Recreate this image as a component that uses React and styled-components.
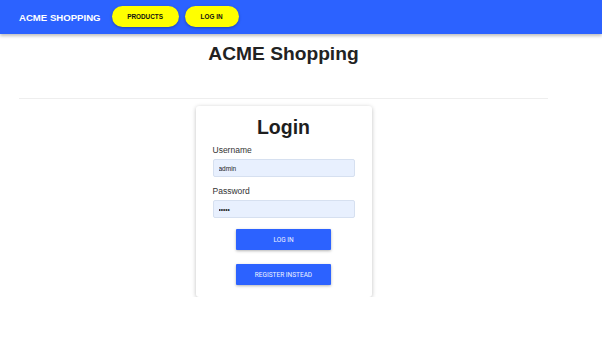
import React from "react";
import styled, { createGlobalStyle } from "styled-components";

const Global = createGlobalStyle`
  * { box-sizing: border-box; }
  body { margin: 0; background: #fff; font-family: "Liberation Sans", Arial, sans-serif; color: #222; }
`;

const NavBar = styled.header`
  height: 34px;
  background: #2c62ff;
  display: flex;
  align-items: center;
  padding-left: 19px;
  gap: 6px;
  box-shadow: 0 2px 3px rgba(0,0,0,0.25);
`;

const Brand = styled.div`
  color: #fff;
  font-weight: bold;
  font-size: 9.6px;
  margin-right: 5px;
`;

const NavButton = styled.button`
  height: 21px;
  width: ${(p) => p.$w}px;
  margin-top: -1px;
  border: none;
  border-radius: 11px;
  background: #ffff00;
  color: #111;
  font-family: "Liberation Sans", Arial, sans-serif;
  font-weight: bold;
  font-size: 6.4px;
  box-shadow: 0 1px 3px rgba(0,0,0,0.3);
  padding: 0;
`;

const Container = styled.main`
  width: 529px;
  margin-left: 19px;
`;

const PageTitle = styled.h1`
  margin: 0;
  padding-top: 9px;
  height: 64px;
  text-align: center;
  font-size: 19.2px;
  font-weight: bold;
  color: #222;
`;

const Rule = styled.hr`
  margin: 0;
  border: none;
  border-top: 1px solid #eee;
`;

const CardWrap = styled.div`
  display: flex;
  justify-content: center;
  padding-top: 7px;
`;

const Card = styled.form`
  width: 176px;
  height: 191px;
  background: #fff;
  border-radius: 3px;
  box-shadow: 0 1px 4px rgba(0,0,0,0.25);
  padding: 9px 17px 0;
  display: flex;
  flex-direction: column;
`;

const CardTitle = styled.h2`
  margin: 0 0 5px;
  text-align: center;
  font-size: 19.5px;
  line-height: 25px;
  font-weight: bold;
  color: #1e1e1e;
`;

const Label = styled.label`
  font-size: 8.5px;
  color: #333;
  line-height: 10px;
  margin-bottom: 4px;
`;

const Input = styled.input`
  height: 18px;
  width: 142px;
  background: #e8f0fe;
  border: 1px solid #d6e0f0;
  border-radius: 2px;
  font-size: 6.5px;
  padding: 0 5px;
  color: #222;
  margin-bottom: 9px;
  font-family: "Liberation Sans", Arial, sans-serif;
`;

const ActionButton = styled.button`
  align-self: center;
  width: 95px;
  height: 21px;
  background: #2c62ff;
  color: #eef2ff;
  border: none;
  border-radius: 1px;
  font-family: Roboto, "Liberation Sans", sans-serif;
  font-size: 6.5px;
  box-shadow: 0 1px 3px rgba(0,0,0,0.3);
  margin-top: ${(p) => p.$mt}px;
  padding: 0;
`;

export default function App() {
  return (
    <>
      <Global />
      <NavBar>
        <Brand>ACME SHOPPING</Brand>
        <NavButton $w={67}>PRODUCTS</NavButton>
        <NavButton $w={54}>LOG IN</NavButton>
      </NavBar>
      <Container>
        <PageTitle>ACME Shopping</PageTitle>
        <Rule />
        <CardWrap>
          <Card onSubmit={(e) => e.preventDefault()}>
            <CardTitle>Login</CardTitle>
            <Label>Username</Label>
            <Input defaultValue="admin" />
            <Label>Password</Label>
            <Input type="password" defaultValue="admin" />
            <ActionButton $mt={2}>LOG IN</ActionButton>
            <ActionButton $mt={14}>REGISTER INSTEAD</ActionButton>
          </Card>
        </CardWrap>
      </Container>
    </>
  );
}
